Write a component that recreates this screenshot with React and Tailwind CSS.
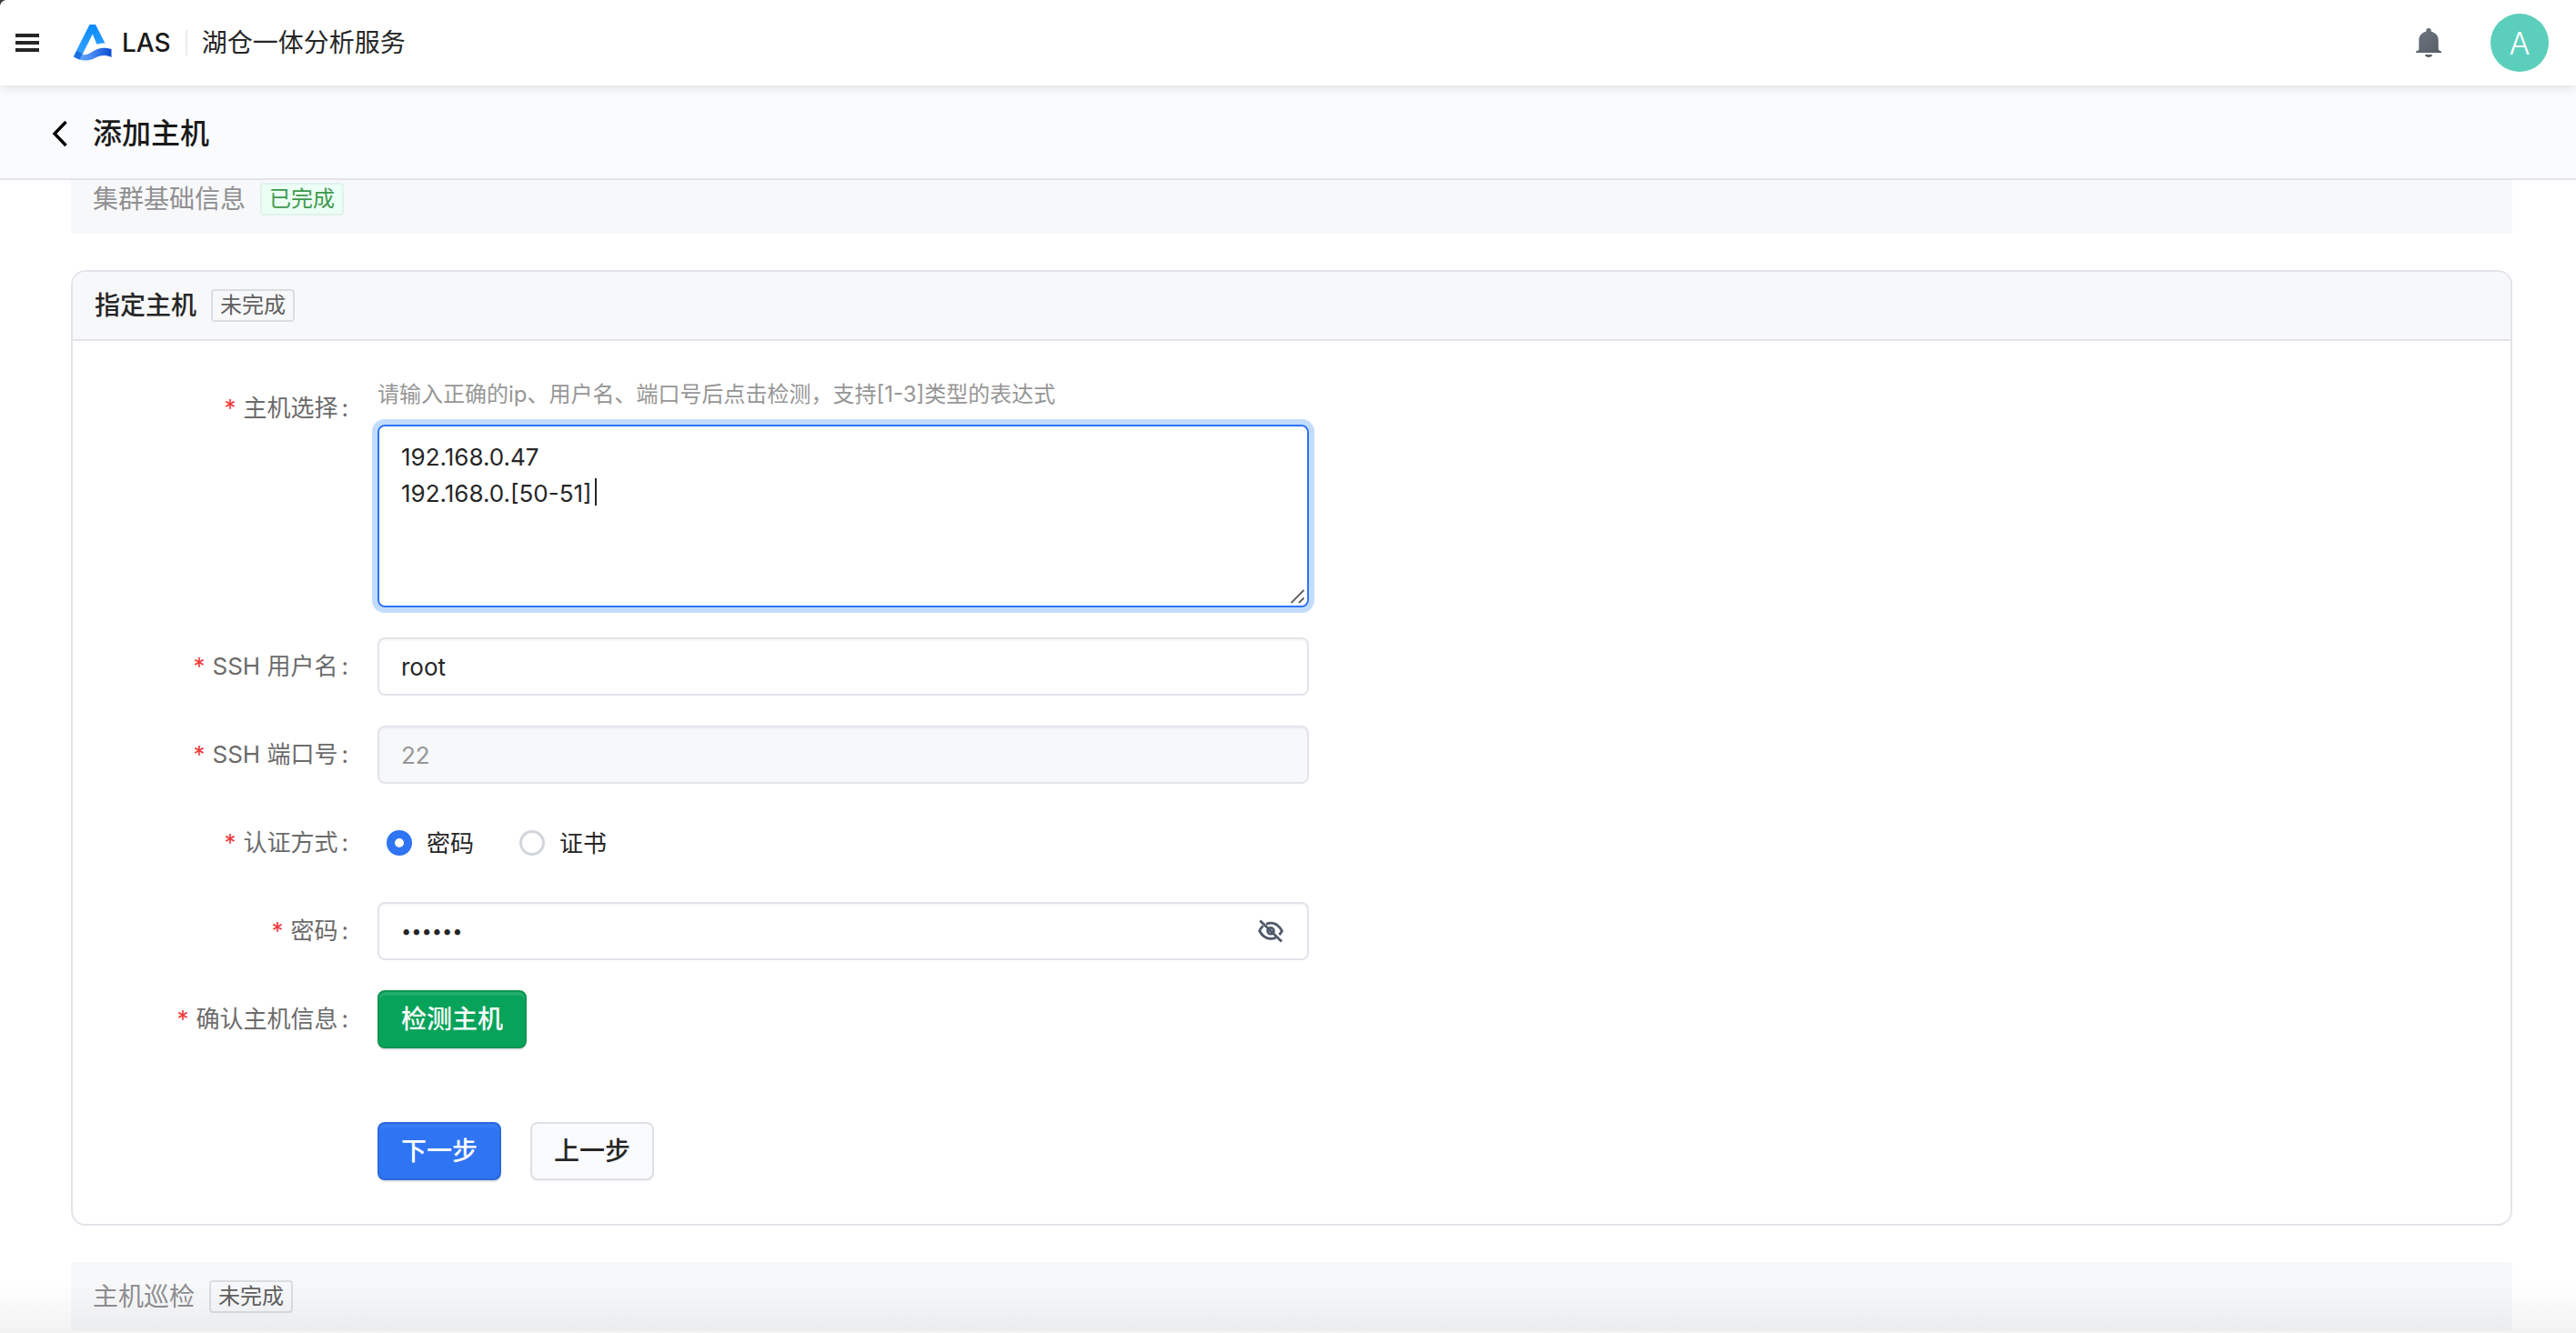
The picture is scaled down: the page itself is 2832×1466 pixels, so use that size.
import { useState } from "react";

function LogoMark() {
  return (
    <svg viewBox="0 0 42 40" className="h-10 w-[42px]" aria-hidden="true">
      <defs>
        <linearGradient id="peak" x1="0" y1="0" x2="0" y2="1">
          <stop offset="0" stopColor="#0a8bff" />
          <stop offset="1" stopColor="#3ba3ff" />
        </linearGradient>
        <linearGradient id="wave" x1="0" y1="0" x2="1" y2="0">
          <stop offset="0" stopColor="#6cabfb" />
          <stop offset="0.45" stopColor="#4a8df5" />
          <stop offset="1" stopColor="#0a4bd0" />
        </linearGradient>
      </defs>
      <path d="M17.5 0h6.5L34.5 20.5C31 20.5 28 20.8 25.5 21.8L20.8 10.5L7.5 37L0 34.5Z" fill="url(#peak)" />
      <path d="M3.5 30C9 34.500 15 34 21 29.500C27 25.500 33 24.500 41.500 27V36C35 33 29 33.500 24 36.500C17 40.500 8 41 0 35.500Z" fill="url(#wave)" />
      <path d="M3.500 29L9.500 32L6.500 38.500L0 35.500Z" fill="#1a6fe0" />
    </svg>
  );
}

function BellIcon() {
  return (
    <svg viewBox="0 0 28 32" className="h-8 w-7" aria-hidden="true">
      <defs>
        <linearGradient id="bell" x1="0" y1="0" x2="1" y2="1">
          <stop offset="0" stopColor="#6f7883" />
          <stop offset="1" stopColor="#555c66" />
        </linearGradient>
      </defs>
      <path d="M14 0a2.800 2.800 0 0 1 2.800 2.800v1C21.500 4.800 24.700 8.500 24.700 13v10c0 1.200 1.300 2 3.300 2.500V27H0v-1.500C2 25 3.300 24.200 3.300 23V13c0-4.500 3.200-8.200 7.900-9.200v-1A2.800 2.800 0 0 1 14 0Z" fill="url(#bell)" />
      <path d="M10 29h8c0 1.700-1.700 3-4 3s-4-1.300-4-3Z" fill="#5b626c" />
    </svg>
  );
}

function EyeOffIcon() {
  return (
    <svg viewBox="0 0 28 26" className="h-[26px] w-7" fill="none" stroke="#4e5969" strokeWidth="2.800" aria-hidden="true">
      <path d="M9 5.200A14 14 0 0 1 14 4.200C19.500 4.200 23.500 7.500 26.400 12.800Q25.200 15 23.400 17" />
      <path d="M5.600 7.200Q3.200 9.400 1.600 12.800C4.500 18 8.500 21.400 14 21.400Q17 21.400 19.600 20.200" />
      <circle cx="14" cy="12.800" r="3.400" />
      <path d="M2.200 1.400L26 24.400" />
    </svg>
  );
}

function Tag({ done, children }) {
  return (
    <span
      className={
        done
          ? "rounded border-2 border-[#e0f2ea] bg-[#ecfff5] px-2 text-2xl leading-8 text-[#3d9a4c]"
          : "rounded border-2 border-[#dcdde0] px-2 text-2xl leading-8 text-[#606060]"
      }
    >
      {children}
    </span>
  );
}

function Row({ label, htmlFor, id, top, children }) {
  return (
    <div className={top ? "flex items-start" : "flex min-h-16 items-center"}>
      <label
        id={id}
        htmlFor={htmlFor}
        className={
          top
            ? "mt-6 mr-8 w-[303px] shrink-0 text-right leading-10 text-[#6b6b6b]"
            : "mr-8 w-[303px] shrink-0 text-right leading-10 text-[#6b6b6b]"
        }
      >
        <span className="mr-2 text-[#f03a3a]">*</span>
        {label}
        <span className="ml-1">:</span>
      </label>
      {children}
    </div>
  );
}

function Radio({ value, text, current, onChange }) {
  return (
    <label className="flex items-center gap-4">
      <input
        type="radio"
        name="auth"
        value={value}
        checked={current === value}
        onChange={() => onChange(value)}
        className="size-7 appearance-none rounded-full border-3 border-[#d2d6dc] bg-white checked:border-9 checked:border-[#2f74f3]"
      />
      {text}
    </label>
  );
}

const field =
  "h-16 w-full rounded-lg border-2 border-[#e3e4ea] px-6 shadow-[inset_0_2px_2px_rgba(0,0,0,0.03)] outline-none";
const button = "h-16 rounded-lg border-2 px-6 text-[28px] leading-10 font-medium";

export default function App() {
  const [auth, setAuth] = useState("password");
  const [hosts, setHosts] = useState("192.168.0.47\n192.168.0.[50-51]");
  const [user, setUser] = useState("root");
  const [password, setPassword] = useState("123456");
  const [visible, setVisible] = useState(false);

  return (
    <div className="h-screen bg-[#3b3b3d] font-[Inter,'Noto_Sans_CJK_SC',sans-serif] text-[26px] text-[#262626]">
      <div className="relative flex h-full flex-col overflow-hidden rounded-tl-lg bg-white">
        <header className="z-20 flex h-[94px] shrink-0 items-center bg-white pr-[30px] pl-[17px] shadow-[0_2px_12px_rgba(0,0,0,0.12)]">
          <button type="button" aria-label="菜单" className="flex w-[26px] flex-col gap-1">
            <span className="h-1 bg-[#262626]" />
            <span className="h-1 bg-[#262626]" />
            <span className="h-1 bg-[#262626]" />
          </button>
          <a href="#" className="ml-[38px] flex items-center gap-[11px] text-[28px] font-medium text-[#1a1a1a]">
            <LogoMark />
            LAS
          </a>
          <span className="mx-4 h-7 w-0.5 bg-[#ebebeb]" />
          <span className="text-[28px]">湖仓一体分析服务</span>
          <button type="button" aria-label="通知" className="ml-auto">
            <BellIcon />
          </button>
          <button
            type="button"
            className="ml-[54px] flex size-16 items-center justify-center rounded-full bg-[#5bcfbb] text-[34px] font-light text-white"
          >
            A
          </button>
        </header>

        <div className="z-10 flex h-[104px] shrink-0 items-center border-b-2 border-[#e3e4e8] bg-[#fafbfd] pt-1 pl-[56px]">
          <button type="button" aria-label="返回">
            <svg viewBox="0 0 18 30" className="h-[30px] w-[18px]" fill="none" stroke="#000" strokeWidth="3.400" aria-hidden="true">
              <path d="M16.500 2L4 15L16.500 28" />
            </svg>
          </button>
          <h1 className="ml-7 text-[32px] font-medium text-[#1a1a1a]">添加主机</h1>
        </div>

        <main className="min-h-0 flex-1 overflow-hidden pr-[70px] pl-[78px]">
          <section className="-mt-[17px] flex h-[76px] items-center gap-4 rounded bg-[#f7f8fa] px-6">
            <h2 className="text-[28px] text-[#8f8f91]">集群基础信息</h2>
            <Tag done>已完成</Tag>
          </section>

          <section className="mt-10 rounded-2xl border-2 border-[#e3e4e9]">
            <div className="flex h-[76px] items-center gap-4 rounded-t-2xl border-b-2 border-[#e3e4e9] bg-[#f7f8fa] px-6">
              <h2 className="text-[28px] font-medium">指定主机</h2>
              <Tag>未完成</Tag>
            </div>

            <form className="flex flex-col gap-[33px] pt-[30px] pb-12" onSubmit={(e) => e.preventDefault()}>
              <Row top label="主机选择" htmlFor="hosts">
                <div className="w-[1024px]">
                  <p className="mt-[9px] text-2xl leading-10 text-[#969696]">
                    请输入正确的ip、用户名、端口号后点击检测，支持[1-3]类型的表达式
                  </p>
                  <div className="relative mt-[13px]">
                    <textarea
                      id="hosts"
                      value={hosts}
                      onChange={(e) => setHosts(e.target.value)}
                      className="block h-[201px] w-full resize-none rounded-lg border-2 border-[#2f74f3] px-6 py-3.5 leading-10 shadow-[0_0_0_6px_#c2dcfc] outline-none"
                    />
                    <span className="absolute top-[59px] left-[239px] h-[30px] w-0.5 bg-[#262626]" />
                    <svg viewBox="0 0 16 16" className="absolute right-1 bottom-1 size-4" stroke="#5c5c5c" strokeWidth="1.800" aria-hidden="true">
                      <path d="M0.500 15L14.500 1M9 15L14.500 9.500" />
                    </svg>
                  </div>
                </div>
              </Row>
              <Row label="SSH 用户名" htmlFor="user">
                <div className="w-[1024px]">
                  <input id="user" value={user} onChange={(e) => setUser(e.target.value)} className={field} />
                </div>
              </Row>
              <Row label="SSH 端口号" htmlFor="port">
                <div className="w-[1024px]">
                  <input id="port" value="22" disabled className={field + " bg-[#f7f8fa] text-[#969696]"} />
                </div>
              </Row>
              <Row label="认证方式" id="auth-label">
                <div role="radiogroup" aria-labelledby="auth-label" className="flex gap-[50px] pl-2.5">
                  <Radio value="password" text="密码" current={auth} onChange={setAuth} />
                  <Radio value="cert" text="证书" current={auth} onChange={setAuth} />
                </div>
              </Row>
              <Row label="密码" htmlFor="password">
                <div className="relative w-[1024px]">
                  <input
                    id="password"
                    type={visible ? "text" : "password"}
                    value={password}
                    onChange={(e) => setPassword(e.target.value)}
                    className={field + (visible ? "" : " text-xl")}
                  />
                  <button
                    type="button"
                    aria-label="显示密码"
                    onClick={() => setVisible(!visible)}
                    className="absolute top-[19px] right-7"
                  >
                    <EyeOffIcon />
                  </button>
                </div>
              </Row>
              <Row label="确认主机信息" id="check-label">
                <button
                  type="button"
                  aria-describedby="check-label"
                  className={button + " border-[#0b944f] bg-[#07a35a] text-white shadow-[0_2px_0_rgba(0,0,0,0.1),inset_0_4px_0_rgba(255,255,255,0.1)]"}
                >
                  检测主机
                </button>
              </Row>
              <div className="mt-12 ml-[335px] flex gap-8">
                <button
                  type="submit"
                  className={button + " border-[#2b69dd] bg-[#2f74f3] text-white shadow-[0_2px_0_rgba(0,0,0,0.1),inset_0_4px_0_rgba(255,255,255,0.05)]"}
                >
                  下一步
                </button>
                <button
                  type="button"
                  className={button + " border-[#dfe0e4] bg-[#fafbfd] shadow-[0_2px_0_rgba(0,0,0,0.03)]"}
                >
                  上一步
                </button>
              </div>
            </form>
          </section>

          <section className="mt-10 flex h-[76px] items-center gap-4 rounded bg-[#f7f8fa] px-6">
            <h2 className="text-[28px] text-[#8f8f91]">主机巡检</h2>
            <Tag>未完成</Tag>
          </section>
        </main>
        <div className="pointer-events-none absolute inset-x-0 bottom-0 h-14 bg-linear-to-t from-black/5 to-transparent" />
      </div>
    </div>
  );
}
